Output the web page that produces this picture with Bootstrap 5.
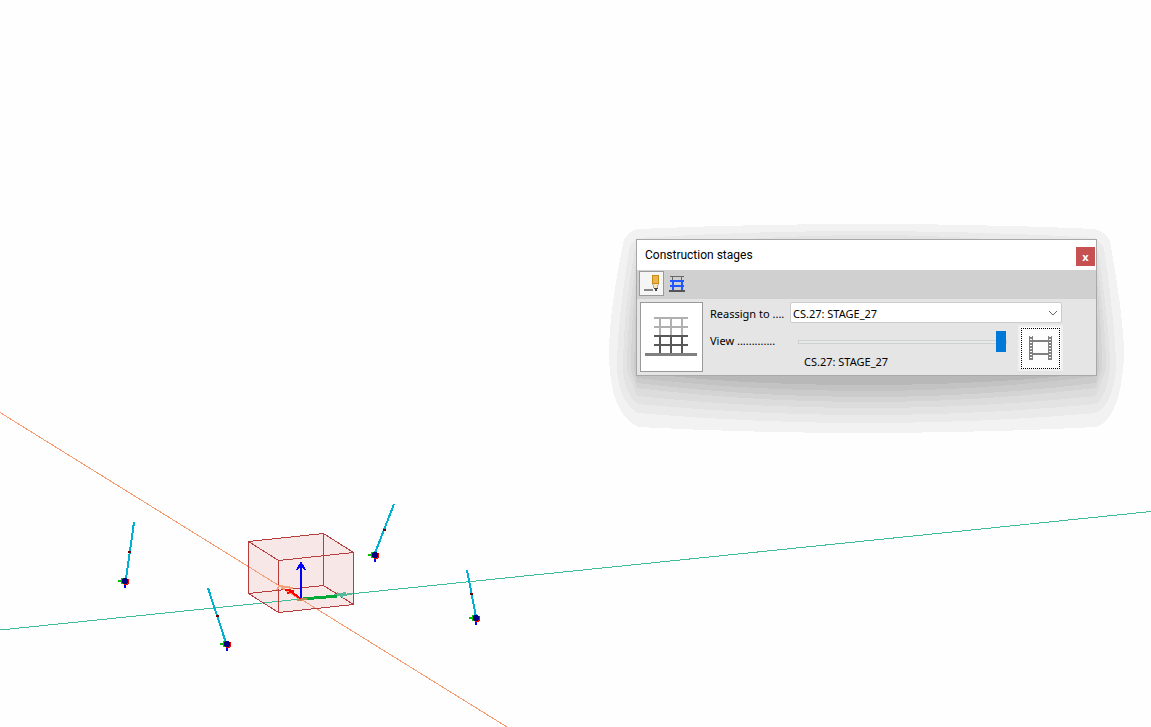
<!DOCTYPE html>
<html lang="en">
<head>
<meta charset="utf-8">
<meta name="viewport" content="width=device-width, initial-scale=1">
<title>Construction stages</title>
<link href="https://cdn.jsdelivr.net/npm/bootstrap@5.3.0/dist/css/bootstrap.min.css" rel="stylesheet">
<style>
  body { background: #fefefe; font-family: "Noto Sans", "Open Sans", sans-serif; font-size: 11px; line-height: 16px; color: #000; }
  .viewport { min-height: 100vh; }
  .scene { position: absolute; inset: 0; width: 100%; height: 100%; }
  .stage-window { position: absolute; left: 636px; top: 239px; width: 461px; }
  .window-shadow { position: absolute; left: -36px; top: -24px; width: 540px; height: 230px; }
  .window-frame { position: relative; background: #e5e5e5; border: 1px solid #a8a8a8; }
  .title-bar { height: 30px; background: #fff; padding-right: 1px; }
  .title-bar h1 { font-family: Roboto, "Noto Sans", sans-serif; font-size: 12px; line-height: 16px; font-weight: 400; }
  .close-btn { width: 19px; height: 19px; margin-top: 3px; background: #c75050; color: #fff; border: 0; font-size: 11px; line-height: 16px; font-weight: 700; }
  .tool-strip { height: 29px; padding: 0 2px 2px; background: #d0d0d0; }
  .tool-btn { width: 25px; height: 25px; border: 1px solid transparent; background: none; padding: 0; }
  .tool-btn.active { background: #f5f5f5; border-color: #999; }
  .tool-btn svg, .preview-btn svg, .film-btn svg { display: block; }
  .stage-body { padding: 3px; }
  .preview-btn { width: 63px; height: 70px; background: #fff; border: 1px solid #999; padding: 0; }
  .controls-area { padding-left: 7px; }
  .field-label { width: 80px; padding-top: 4px; white-space: nowrap; }
  .view-label { padding-top: 10px; }
  .stage-select { height: 21px; width: 272px; padding: 2px 20px 0 2px; border: 1px solid #ccc; border-radius: 2px; font-size: 11px; line-height: 16px; color: #000;
    background: #fff url("data:image/svg+xml,%3Csvg xmlns='http://www.w3.org/2000/svg' viewBox='0 0 10 6'%3E%3Cpath d='M1 1l4 4 4-4' fill='none' stroke='%23666'/%3E%3C/svg%3E") no-repeat right 3px center / 10px 6px; }
  .range-area { width: 228px; padding: 8px 0 0 8px; }
  .stage-range { appearance: none; display: block; width: 209px; height: 21px; margin: 0; background: none; }
  .stage-range::-webkit-slider-runnable-track { height: 4px; background: #e7eaea; border: 1px solid #d0d0d0; }
  .stage-range::-webkit-slider-thumb { appearance: none; width: 10px; height: 21px; margin-top: -10px; background: #0078d7; border: 0; border-radius: 0; }
  .stage-name { padding: 2px 0 0 6px; }
  .film-btn { width: 45px; height: 46px; margin-top: 2px; padding: 0; background: #fdfdfd; border: 2px solid #f0f0f0; }
  .film-btn span { width: 39px; height: 41px; border: 1px dotted #000; }
</style>
</head>
<body>
<main class="viewport position-relative overflow-hidden">
  <svg class="scene" viewBox="0 0 1151 727" preserveAspectRatio="xMinYMin slice" shape-rendering="crispEdges" fill="none" aria-hidden="true">
    <defs>
      <g id="node">
        <path d="M-7 0H-2" stroke="#00c000" stroke-width="2"/>
        <path d="M-3-3V3" stroke="#00c000" stroke-width="3"/>
        <path d="M0 2V7" stroke="#00f" stroke-width="2"/>
        <path d="M-1-2H4V3H3V4H-1Z" fill="#f00"/>
        <path d="M-2-3H2V-2H3V2H2V3H-2V2H-3V-2H-2Z" fill="#000080"/>
      </g>
    </defs>
    <path d="M248 541L323 533L354 552V604L279 612L248 593Z" fill="#f8e7e7"/>
    <path d="M0 412.5L507 727" stroke="#f79a70"/>
    <path d="M0 630L1151 511.5" stroke="#3fbd98"/>
    <path d="M248.5 541.5L323.5 533.5L353.5 552.5V604.5L278.5 612.5L248.5 593.5ZM248.5 541.5L278.5 560.5L353.5 552.5M278.5 560.5V612.5M323.5 533.5V585.5L248.5 593.5M323.5 585.5L353.5 604.5" stroke="#b83c3c"/>
    <path d="M300 599L281 587M277 590L279 586L293 588" stroke="#f5a27c" stroke-width="2"/>
    <path d="M302 599L352 594M337 593L343 597M334 595L346 593" stroke="#58b998" stroke-width="2"/>
    <path d="M301 599L290 591M285 590L294 591L287 593" stroke="#f00" stroke-width="2"/>
    <path d="M303 599L337 596" stroke="#00aa38" stroke-width="3"/>
    <path d="M297 600L307 599" stroke="#b98c50" stroke-width="2"/>
    <path d="M301 598V563" stroke="#00f" stroke-width="2"/>
    <path d="M297 570L301 563L305 570" stroke="#00f" stroke-width="2"/>
    <path d="M134 522L126 579M208 588L226 643M394 504L375 553M467 570L476 617" stroke="#00b0d0" stroke-width="2"/>
    <path d="M128 552h3M216 616h3M383 530h3M470 594h3" stroke="#600" stroke-width="2"/>
    <use href="#node" x="125" y="581"/>
    <use href="#node" x="227" y="644"/>
    <use href="#node" x="375" y="555"/>
    <use href="#node" x="476" y="618"/>
  </svg>

  <section class="stage-window" aria-labelledby="window-title">
    <svg class="window-shadow" viewBox="600 215 540 230" shape-rendering="crispEdges" aria-hidden="true">
      <path fill="#f2f2f2" d="M624 240Q630 230 638 229Q750 224 866 224Q982 224 1095 229Q1104 231 1110 241Q1124 320 1124 355Q1121 419 1096 427Q980 433 866 433Q752 433 638 427Q610 414 609 355Q609 310 624 240Z"/>
      <path fill="#eaeaea" d="M630 246L637 238Q750 231 866 231Q982 231 1096 238L1104 248Q1116 330 1116 370Q1112 405 1096 413Q980 423 866 423Q752 423 637 413Q619 400 617 370Q617 320 630 246Z"/>
      <path fill="#e3e3e3" d="M635 250Q750 235 866 235Q982 235 1098 250Q1110 330 1110 370Q1106 397 1096 404Q980 415 866 415Q752 415 637 404Q625 393 623 370Q623 310 635 250Z"/>
      <path fill="#dcdcdc" d="M636 262L1097 262Q1106 330 1106 370L1096 396Q980 408 866 408Q752 408 637 396L627 370Q627 320 636 262Z"/>
      <path fill="#d4d4d4" d="M636 280H1097Q1102 330 1102 370L1096 388Q980 402 866 402Q752 402 637 388L631 370Q631 325 636 280Z"/>
      <path fill="#cbcbcb" d="M636 300H1097L1099 370L1096 383Q980 397 866 397Q752 397 637 383L634 370Z"/>
      <path fill="#c3c3c3" d="M637 376H1097Q980 391 866 391Q752 391 637 378Z"/>
      <path fill="#b8b8b8" d="M670 376H1065Q970 385 866 385Q755 385 670 376Z"/>
    </svg>

    <div class="window-frame">
      <header class="title-bar d-flex align-items-center justify-content-between ps-2">
        <h1 id="window-title" class="mb-0">Construction stages</h1>
        <button type="button" class="close-btn d-flex align-items-center justify-content-center p-0" aria-label="Close">x</button>
      </header>

      <div class="tool-strip d-flex align-items-center" role="toolbar" aria-label="Stage tools">
        <button type="button" class="tool-btn active" aria-label="Edit stage">
          <svg width="23" height="23" viewBox="0 0 23 23" shape-rendering="crispEdges">
            <path d="M4 18H13" stroke="#888" stroke-width="2"/>
            <path d="M12 3H19V12H12Z" fill="#e8b350"/><path d="M12.5 3.5H18.5V11.5H12.5Z" fill="none" stroke="#c98c10"/>
            <path d="M12 12H19L17 17H14Z" fill="#f5e6c0"/><path d="M12.5 12L14.5 17M18.5 12L16.500 17" stroke="#aaa"/>
            <path d="M14 16H18L16 20Z" fill="#444"/>
          </svg>
        </button>
        <button type="button" class="tool-btn" aria-label="Show structure">
          <svg width="23" height="23" viewBox="0 0 23 23" shape-rendering="crispEdges" fill="none">
            <path d="M5 4.5H19M7.5 4V8M16.5 4V8" stroke="#666"/>
            <path d="M5 9H19M5 14H19M8 8V18M17 8V18" stroke="#2058ff" stroke-width="2"/>
            <path d="M4 19H20" stroke="#555" stroke-width="2"/>
          </svg>
        </button>
      </div>

      <div class="stage-body d-flex align-items-start">
        <button type="button" class="preview-btn flex-shrink-0" aria-label="Structure preview">
          <svg width="61" height="68" viewBox="0 0 61 68" shape-rendering="crispEdges" fill="none">
            <path d="M13 15H47M13 24H47M19 14V32M30 14V32M41 14V32" stroke="#b0b0b0" stroke-width="2"/>
            <path d="M13 33H47M13 42H47M19 33V50M30 33V50M41 33V50" stroke="#585858" stroke-width="2"/>
            <path d="M4 51.5H56" stroke="#808080" stroke-width="3"/>
          </svg>
        </button>
        <div class="controls-area">
          <div class="d-flex align-items-start">
            <label class="field-label" for="reassign">Reassign to ....</label>
            <select id="reassign" class="form-select stage-select"><option>CS.27: STAGE_27</option></select>
          </div>
          <div class="d-flex">
            <label class="field-label view-label" for="view-stage">View .............</label>
            <div class="range-area">
              <input id="view-stage" class="stage-range" type="range" min="1" max="27" value="27">
              <output class="d-block stage-name" for="view-stage">CS.27: STAGE_27</output>
            </div>
            <button type="button" class="film-btn d-flex align-items-center justify-content-center" aria-label="Animate stages">
              <span class="d-flex align-items-center justify-content-center">
                <svg width="23" height="24" viewBox="0 0 23 24" shape-rendering="crispEdges" fill="none">
                  <path d="M0 0H4V24H0ZM19 0H23V24H19ZM4 4H19V6H4ZM4 17H19V19H4Z" fill="#808080"/>
                  <path d="M2 0V24M21 0V24" stroke="#fdfdfd" stroke-width="2" stroke-dasharray="1 2"/>
                </svg>
              </span>
            </button>
          </div>
        </div>
      </div>
    </div>
  </section>
</main>
<script src="https://cdn.jsdelivr.net/npm/bootstrap@5.3.0/dist/js/bootstrap.bundle.min.js"></script>
</body>
</html>
